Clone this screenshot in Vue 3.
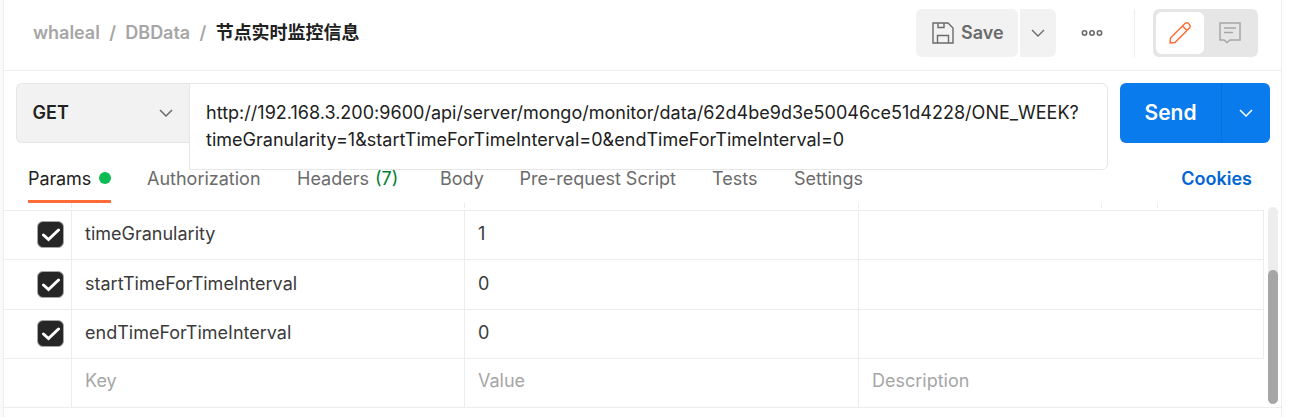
<script setup>
const tabs = [
  { label: 'Params', width: 119, active: true },
  { label: 'Authorization', width: 150 },
  { label: 'Headers', width: 143, count: '(7)' },
  { label: 'Body', width: 79.5 },
  { label: 'Pre-request Script', width: 192.5 },
  { label: 'Tests', width: 82 },
  { label: 'Settings', width: 100 },
]
const rows = [
  { key: 'timeGranularity', value: '1' },
  { key: 'startTimeForTimeInterval', value: '0' },
  { key: 'endTimeForTimeInterval', value: '0' },
]
</script>

<template>
  <div class="page">
    <main class="panel">
      <header class="topbar">
        <nav class="crumbs">
          <span>whaleal</span><span class="sep">/</span><span>DBData</span><span class="sep">/</span>
          <strong>节点实时监控信息</strong>
        </nav>
        <div class="save">
          <button class="btn save-main">
            <svg width="22" height="22" viewBox="0 0 22 22" fill="none" stroke="#6b6b6b" stroke-width="1.4">
              <path d="M1 1H16L21 6V21H1Z M6 1V5.500H12V1 M5.500 21V13.500H16.500V21" />
            </svg>
            <span>Save</span>
          </button>
          <button class="btn save-more">
            <svg width="14" height="8" viewBox="0 0 14 8" fill="none" stroke="#6b6b6b" stroke-width="1.4"><path d="M1 1L7 7L13 1" /></svg>
          </button>
        </div>
        <svg class="dots" width="22" height="8" viewBox="0 0 22 8" fill="none" stroke="#6b6b6b" stroke-width="1.6">
          <circle cx="3.500" cy="4" r="2.200" /><circle cx="11" cy="4" r="2.200" /><circle cx="18.500" cy="4" r="2.200" />
        </svg>
        <i class="divider"></i>
        <div class="toggle">
          <span class="seg on">
            <svg width="24" height="24" viewBox="0 0 24 24" fill="none" stroke="#ff6c37" stroke-width="1.5" stroke-linejoin="round">
              <path d="M2 22L2.500 17L17 2.500Q19 .9 21 3Q23 5 21.500 7L7 21.500Z M14.500 5L19 9.500" />
            </svg>
          </span>
          <span class="seg">
            <svg width="22" height="22" viewBox="0 0 22 22" fill="none" stroke="#a6a6a6" stroke-width="1.5">
              <path d="M1 1H21V18H11L8 20.500L5 18H1Z M5 6H17 M5 10.500H14" />
            </svg>
          </span>
        </div>
      </header>

      <section class="request">
        <div class="method">
          <span>GET</span>
          <svg width="14" height="8" viewBox="0 0 14 8" fill="none" stroke="#6b6b6b" stroke-width="1.5"><path d="M1 1L7 7L13 1" /></svg>
        </div>
        <div class="url">
          <div>http://192.168.3.200:9600/api/server/mongo/monitor/data/62d4be9d3e50046ce51d4228/ONE_WEEK?</div>
          <div>timeGranularity=1&amp;startTimeForTimeInterval=0&amp;endTimeForTimeInterval=0</div>
        </div>
        <div class="send">
          <span class="send-main">Send</span>
          <span class="send-more">
            <svg width="14" height="8" viewBox="0 0 14 8" fill="none" stroke="#fff" stroke-width="1.5"><path d="M1 1L7 7L13 1" /></svg>
          </span>
        </div>
      </section>

      <nav class="tabs">
        <div v-for="t in tabs" :key="t.label" class="slot" :style="{ width: t.width + 'px' }">
          <span class="tab" :class="{ active: t.active }">
            {{ t.label }}<em v-if="t.count">{{ t.count }}</em><i v-if="t.active" class="dot"></i>
          </span>
        </div>
        <span class="cookies">Cookies</span>
      </nav>

      <section class="sheet">
        <div class="table">
          <div class="row head"><i></i><i></i><i></i><i></i><i></i><i></i></div>
          <div v-for="(r, n) in rows" :key="r.key" class="row" :class="'r' + n">
            <div class="cell check">
              <span class="box">
                <svg width="18" height="14" viewBox="0 0 18 14" fill="none" stroke="#fff" stroke-width="3" stroke-linecap="round"><path d="M1.500 7L6.500 11.500L16.500 2" /></svg>
              </span>
            </div>
            <div class="cell">{{ r.key }}</div>
            <div class="cell">{{ r.value }}</div>
            <div class="cell"></div>
          </div>
          <div class="row blank">
            <div class="cell"></div>
            <div class="cell">Key</div>
            <div class="cell">Value</div>
            <div class="cell">Description</div>
          </div>
        </div>
        <div class="track"><div class="thumb"></div></div>
      </section>
    </main>
  </div>
</template>

<style>
body { overflow: hidden; }
</style>

<style scoped>
* { box-sizing: border-box; }
svg { display: block; flex: none; }
.page {
  width: 1298px; height: 417px; padding-left: 3px; background: #fafafa; display: flex;
  font: 400 18px/27px Inter, "Noto Sans CJK SC", sans-serif; color: #212121;
}
.page::after { content: ""; flex: 1; background: #fff; }
.panel { width: 1279px; height: 417px; background: #fff; border-left: 1px solid #ededed; border-right: 1px solid #ededed; }
.topbar { height: 71px; border-bottom: 1px solid #ededed; display: flex; align-items: center; padding: 0 23px 5px 29px; }
.crumbs { width: 883px; display: flex; align-items: center; color: #a6a6a6; font-weight: 600; white-space: nowrap; letter-spacing: -0.03px; }
.sep { width: 25.5px; text-align: center; }
.crumbs strong { color: #212121; font-weight: 700; }
.save { display: flex; gap: 2px; }
.btn { height: 48px; border: 0; padding: 0; background: #f2f2f2; color: #6b6b6b; font: inherit; font-weight: 600; display: flex; align-items: center; }
.save-main { width: 102px; border-radius: 6px; padding-left: 16px; gap: 7px; }
.save-more { width: 36px; border-radius: 0 6px 6px 0; justify-content: center; }
.dots { margin-left: 25px; }
.divider { width: 1px; height: 48px; background: #ededed; margin-left: 31px; }
.toggle { margin-left: 18px; width: 105px; height: 48px; border-radius: 6px; background: #e6e6e6; display: flex; padding: 3px; }
.seg { width: 48px; height: 42px; border-radius: 6px; display: flex; align-items: center; justify-content: center; }
.seg:last-child { width: 51px; }
.seg.on { background: #fff; }

.request { height: 72px; padding: 12px 11px 0 12px; display: flex; align-items: flex-start; }
.method { width: 173px; height: 60px; background: #f2f2f2; border: 1px solid #e6e6e6; border-right: 0; border-radius: 6px 0 0 6px; padding: 0 16px 1px 15.500px; display: flex; align-items: center; justify-content: space-between; font-weight: 600; }
.url { width: 919px; flex: none; height: 87px; border: 1px solid #e6e6e6; border-radius: 0 6px 6px 0; padding: 15px 16px; white-space: nowrap; background: #fff; letter-spacing: 0.018px; }
.send { flex: none; margin-left: 12px; width: 150px; height: 60px; border-radius: 6px; background: #097bed; color: #fff; display: flex; }
.send-main { width: 102px; border-right: 1px solid #0871da; font-size: 21px; font-weight: 600; display: flex; align-items: center; justify-content: center; padding-bottom: 1px; }
.send-more { flex: 1; display: flex; align-items: center; justify-content: center; }

.tabs { height: 60px; padding: 0 29px 0 24px; display: flex; color: #6b6b6b; white-space: nowrap; }
.tab { display: inline-flex; align-items: center; height: 60px; padding-top: 10px; }
.tab.active { color: #212121; border-bottom: 3px solid #ff6c37; padding-top: 13px; letter-spacing: -0.1px; }
.dot { width: 12px; height: 12px; border-radius: 50%; background: #0cbb52; margin-left: 8px; }
.tab em { font-style: normal; color: #007f31; margin-left: 6px; }
.cookies { margin-left: auto; font-weight: 600; color: #0265d2; line-height: 27px; padding-top: 22px; }

.sheet { height: 205px; border-bottom: 1px solid #ededed; display: flex; }
.table { width: 1260px; }
.row { display: grid; grid-template-columns: 67px 393px 394px 406px; height: 49px; border-top: 1px solid #ededed; }
.row.r1 { height: 50px; }
.head { grid-template-columns: 67px 393px 394px 243px 56px 1fr; height: 7px; border: 0; padding-bottom: 2px; }
.head i { border-left: 1px solid #ededed; }
.head i:first-child { border: 0; }
.cell { border-left: 1px solid #ededed; padding-left: 13px; line-height: 45px; color: #3b3b3b; }
.r1 .cell { line-height: 47px; }
.cell:first-child { border-left: 0; }
.row:not(.head):not(.blank) .cell:last-child { border-right: 1px solid #ededed; }
.blank .cell { color: #a6a6a6; line-height: 43px; }
.check { padding: 10px 0 0 33px; }
.r1 .check { padding-top: 11px; }
.box { width: 27px; height: 27px; border-radius: 6px; background: #262626; border: 1px solid #a6a6a6; display: flex; align-items: center; justify-content: center; }
.track { margin: 4px 0 0 4px; width: 10px; height: 197px; border-radius: 5px; background: #ededed; padding-top: 63px; }
.thumb { height: 134px; border-radius: 5px; background: #a6a6a6; }
</style>
